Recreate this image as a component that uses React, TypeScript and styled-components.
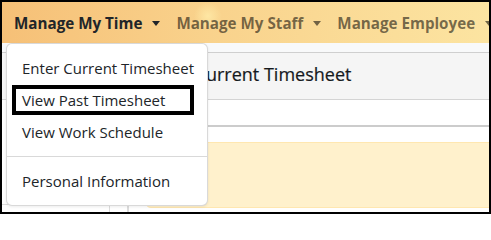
import React from "react";
import styled, { createGlobalStyle } from "styled-components";

const GlobalStyle = createGlobalStyle`
  html, body {
    margin: 0;
    padding: 0;
    background: #fff;
  }
  body {
    font-family: "Open Sans", "Noto Sans", sans-serif;
    color: #212529;
  }
`;

const navItems = [
  { label: "Manage My Time", active: true },
  { label: "Manage My Staff", active: false },
  { label: "Manage Employee", active: false },
];

const menuItems = [
  { label: "Enter Current Timesheet" },
  { label: "View Past Timesheet", boxed: true },
  { label: "View Work Schedule" },
  { divider: true },
  { label: "Personal Information" },
];

const App = () => {
  return (
    <>
      <GlobalStyle />
      <Frame>
        <Navbar>
          {navItems.map((item) => (
            <NavLink key={item.label} $active={item.active}>
              {item.label}
              <Caret />
            </NavLink>
          ))}
        </Navbar>
        <PageArea>
          <Card>
            <CardHeader>Enter Current Timesheet</CardHeader>
            <CardBody>
              <SideColumn>
                <SideRow>
                  <SideCell $width={108} />
                  <SideCell $width={17} />
                </SideRow>
              </SideColumn>
              <MainColumn>
                <Alert />
              </MainColumn>
            </CardBody>
          </Card>
        </PageArea>
        <DropdownMenu>
          {menuItems.map((item, i) =>
            item.divider ? (
              <Divider key={i} />
            ) : (
              <MenuItem key={i} $boxed={item.boxed}>
                {item.label}
              </MenuItem>
            )
          )}
        </DropdownMenu>
      </Frame>
    </>
  );
};

export default App;

const Frame = styled.div`
  position: relative;
  display: flex;
  flex-direction: column;
  width: 491px;
  height: 214px;
  box-sizing: border-box;
  border: 2px solid #000;
  overflow: hidden;
  background: #fff;
`;

const Navbar = styled.nav`
  display: flex;
  align-items: center;
  flex-shrink: 0;
  height: 41px;
  padding-left: 4px;
  white-space: nowrap;
  background:
    radial-gradient(circle at 206px 14px, rgba(255, 236, 170, 0.8) 0, rgba(255, 236, 170, 0) 14px),
    linear-gradient(90deg, #f6c077 0%, #f9d38d 45%, #fce4a1 100%);
`;

const NavLink = styled.a<{ $active?: boolean }>`
  display: flex;
  align-items: center;
  padding: 1px 8px 0;
  font-size: 15.2px;
  font-weight: 700;
  line-height: 24px;
  color: ${({ $active }) => ($active ? "#212529" : "rgba(0, 0, 0, 0.55)")};
  cursor: pointer;
`;

const Caret = styled.span`
  display: inline-block;
  margin-left: 10px;
  margin-top: 1px;
  width: 0;
  height: 0;
  border-top: 5px solid currentColor;
  border-left: 4px solid transparent;
  border-right: 4px solid transparent;
`;

const PageArea = styled.div`
  display: flex;
  flex-direction: column;
  flex: 1;
  padding-top: 9px;
  background: #f8f9fa;
  min-height: 0;
`;

const Card = styled.div`
  display: flex;
  flex-direction: column;
  flex: 1;
  border-top: 1px solid #cfcfcf;
  background: #fff;
`;

const CardHeader = styled.div`
  display: flex;
  align-items: center;
  height: 47px;
  box-sizing: border-box;
  padding-left: 143px;
  padding-bottom: 4px;
  font-size: 18px;
  font-weight: 500;
  color: #15191d;
  -webkit-text-stroke: 0.2px #15191d;
  background: #f5f5f5;
  border-bottom: 1px solid #d4d4d4;
  white-space: nowrap;
`;

const CardBody = styled.div`
  display: flex;
  flex: 1;
  padding-top: 25px;
`;

const SideColumn = styled.div`
  display: flex;
  flex-direction: column;
  justify-content: flex-end;
  width: 126px;
  flex-shrink: 0;
`;

const SideRow = styled.div`
  display: flex;
  height: 7px;
  border-top: 1px solid #dcdcdc;
`;

const SideCell = styled.div<{ $width: number }>`
  width: ${({ $width }) => $width}px;
  border-right: 1px solid #dcdcdc;
`;

const MainColumn = styled.div`
  flex: 1;
  padding: 15px 0 0 16px;
  border-top: 2px solid #cccccc;
  border-left: 1px solid #dcdcdc;
`;

const Alert = styled.div`
  height: 64px;
  margin-right: -20px;
  background: #fff1cc;
  border: 1px solid #ffe7b0;
  border-radius: 6px;
`;

const DropdownMenu = styled.div`
  position: absolute;
  top: 41px;
  left: 4px;
  width: 202px;
  box-sizing: border-box;
  padding: 8px 0;
  background: #fff;
  border: 1px solid rgba(0, 0, 0, 0.15);
  border-radius: 6px;
  box-shadow: 0 1px 3px rgba(0, 0, 0, 0.08);
`;

const MenuItem = styled.div<{ $boxed?: boolean }>`
  position: relative;
  padding: 4px 15px;
  font-size: 15px;
  line-height: 24px;
  color: #212529;
  white-space: nowrap;

  ${({ $boxed }) =>
    $boxed &&
    `
    &::after {
      content: "";
      position: absolute;
      top: 1px;
      bottom: 1px;
      left: 5px;
      right: 13px;
      border: 4px solid #000;
    }
  `}
`;

const Divider = styled.div`
  margin: 8px 0;
  border-top: 1px solid rgba(0, 0, 0, 0.15);
`;
